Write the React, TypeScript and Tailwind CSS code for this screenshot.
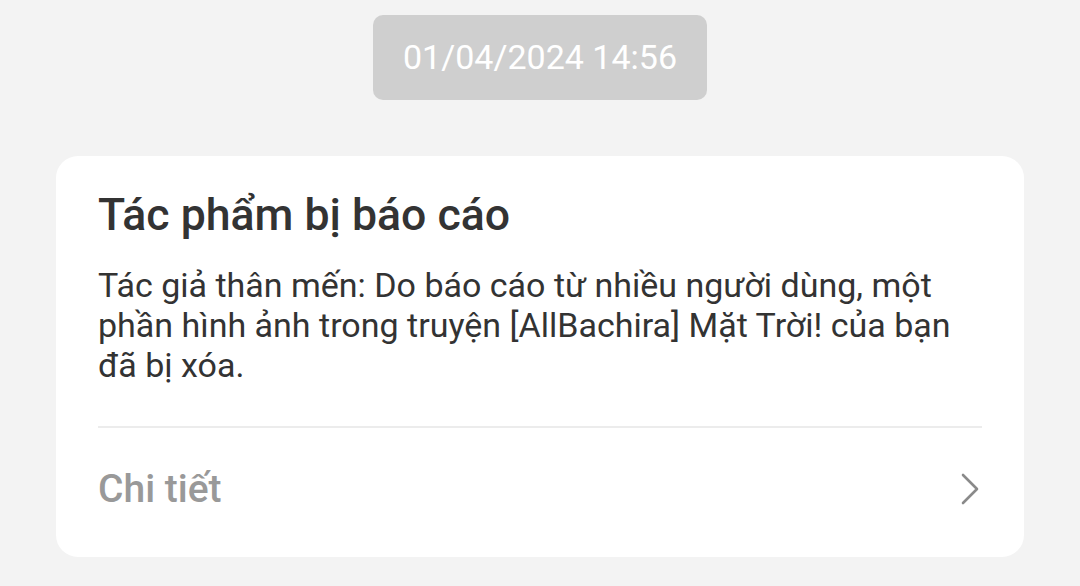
export default function App(): React.JSX.Element {
  return (
    <div className="w-[1080px] h-[586px] bg-[#f3f3f3] flex flex-col items-center font-['Roboto',sans-serif] overflow-hidden">
      <div className="mt-[15px] w-[334px] h-[85px] rounded-[10px] bg-[#cfcfcf] flex items-center justify-center text-white text-[34px]">
        01/04/2024 14:56
      </div>

      <div className="mt-[56px] w-[968px] h-[401px] rounded-[22px] bg-white px-[42px] flex flex-col">
        <h1 className="mt-[31px] text-[44.6px] leading-[56px] font-medium text-[#333333]">
          Tác phẩm bị báo cáo
        </h1>
        <p className="mt-[22px] text-[34px] leading-[40px] text-[#333333]">
          Tác giả thân mến: Do báo cáo từ nhiều người dùng, một
          <br />
          phần hình ảnh trong truyện [AllBachira] Mặt Trời! của bạn
          <br />
          đã bị xóa.
        </p>
        <div className="mt-[41px] h-[2px] bg-[#ececec]" />
        <div className="h-[122px] flex items-center justify-between">
          <span className="text-[39px] font-medium text-[#999999]">Chi tiết</span>
          <svg width="20" height="32" viewBox="0 0 20 32" fill="none" className="mr-[2px]">
            <path d="M3 2 L17 16 L3 30" stroke="#8a8a8a" strokeWidth="2.6" strokeLinecap="round" strokeLinejoin="round" />
          </svg>
        </div>
      </div>
    </div>
  )
}
